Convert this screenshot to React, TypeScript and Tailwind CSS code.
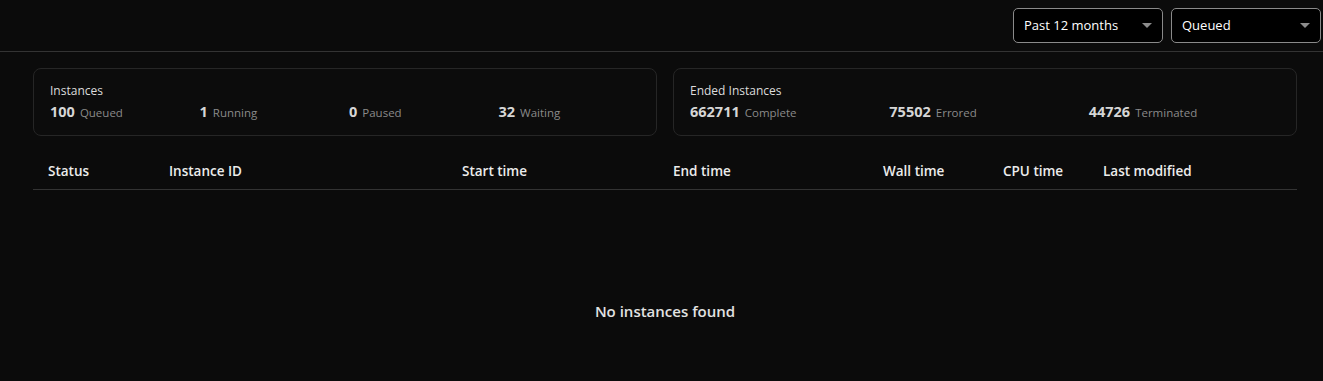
import React from 'react';

const font = { fontFamily: '"Open Sans", "Noto Sans", sans-serif' };

function Select({ label }: { label: string }) {
  return (
    <div className="flex h-[35px] w-[150px] items-center justify-between rounded-[5px] border border-[#8a8a8a] bg-black pl-[10px] pr-[10px] pt-[1px] text-[13px] text-white">
      <span>{label}</span>
      <svg width="10" height="6" viewBox="0 0 10 6">
        <path d="M0 0 L10 0 L5 5 Z" fill="#8c8c8c" />
      </svg>
    </div>
  );
}

function Stat({ value, label }: { value: string; label: string }) {
  return (
    <div className="flex items-baseline gap-[5px]">
      <span className="text-[14.5px] font-bold text-[#d6d6d6]">{value}</span>
      <span className="text-[11.5px] text-[#8a8a8a]">{label}</span>
    </div>
  );
}

const columns = [
  { name: 'Status', w: 'w-[121px]' },
  { name: 'Instance ID', w: 'w-[293px]' },
  { name: 'Start time', w: 'w-[211px]' },
  { name: 'End time', w: 'w-[210px]' },
  { name: 'Wall time', w: 'w-[120px]' },
  { name: 'CPU time', w: 'w-[100px]' },
  { name: 'Last modified', w: 'flex-1' },
];

export default function App() {
  return (
    <div className="min-h-[381px] w-full bg-[#0b0b0b]" style={font}>
      {/* Top bar with filters */}
      <div className="flex h-[52px] items-center justify-end gap-[8px] border-b border-[#333] pr-[2px]">
        <Select label="Past 12 months" />
        <Select label="Queued" />
      </div>

      <div className="pl-[33px] pr-[26px] pt-[16px]">
        {/* Summary cards */}
        <div className="flex gap-[16px]">
          <div className="h-[68px] w-[624px] rounded-[8px] border border-[#262626] bg-[#0c0c0c] pl-[16px] pt-[14px]">
            <div className="text-[12px] leading-[16px] text-[#dcdcdc]">Instances</div>
            <div className="mt-[2px] grid w-[598px] grid-cols-4 leading-[22px]">
              <Stat value="100" label="Queued" />
              <Stat value="1" label="Running" />
              <Stat value="0" label="Paused" />
              <Stat value="32" label="Waiting" />
            </div>
          </div>
          <div className="h-[68px] w-[624px] rounded-[8px] border border-[#262626] bg-[#0c0c0c] pl-[16px] pt-[14px]">
            <div className="text-[12px] leading-[16px] text-[#dcdcdc]">Ended Instances</div>
            <div className="mt-[2px] grid w-[598px] grid-cols-3 leading-[22px]">
              <Stat value="662711" label="Complete" />
              <Stat value="75502" label="Errored" />
              <Stat value="44726" label="Terminated" />
            </div>
          </div>
        </div>

        {/* Table */}
        <div className="mt-[18px]">
          <div className="flex h-[36px] items-center border-b border-[#333] text-[13.5px] font-semibold text-[#ececec]">
            {columns.map((c) => (
              <div key={c.name} className={`${c.w} pl-[15px]`}>
                {c.name}
              </div>
            ))}
          </div>
          <div className="flex h-[138px] items-end justify-center pb-[6px] text-[15px] font-semibold text-[#e2e2e2]">
            No instances found
          </div>
        </div>
      </div>
    </div>
  );
}
